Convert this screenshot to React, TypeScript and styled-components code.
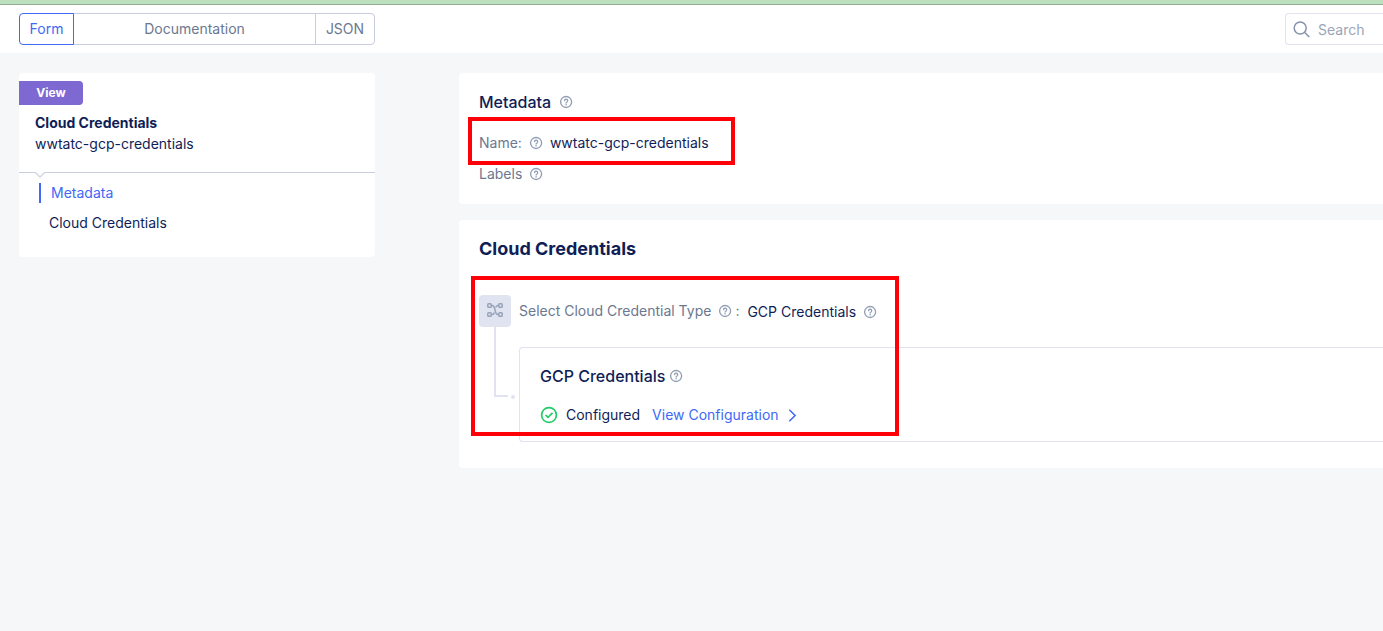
import React from "react";
import styled, { createGlobalStyle } from "styled-components";

const color = {
  navy: "#0f1e57",
  slate: "#6b7890",
  muted: "#9aa5b8",
  blue: "#4169f5",
  line: "#c9cbdf",
  softLine: "#e1e3f0",
  page: "#f6f7f9",
  purple: "#7d69d1",
  green: "#22cb68",
  mark: "#ff0008",
};

const GlobalStyle = createGlobalStyle`
  *, *::before, *::after { box-sizing: border-box; }
  body {
    margin: 0;
    background: ${color.page};
    color: ${color.navy};
    font: 400 14px/20px Inter, "Liberation Sans", sans-serif;
    overflow-x: hidden;
  }
  button, input { font: inherit; }
  h1, h2, h3, p, ul { margin: 0; padding: 0; }
`;

const Banner = styled.div`
  height: 5px;
  background: #bcdfbd;
  border-bottom: 1px solid #8fae93;
`;

const Header = styled.header`
  display: flex;
  justify-content: space-between;
  padding: 8px 0 8px 19px;
  background: #fff;
`;

const Tabs = styled.div`
  display: flex;
  width: 356px;
`;

const Tab = styled.button<{ $active?: boolean; $flex: string }>`
  position: relative;
  z-index: ${(p) => (p.$active ? 1 : 0)};
  flex: ${(p) => p.$flex};
  height: 32px;
  padding: 0;
  border: 1px solid ${(p) => (p.$active ? color.blue : color.line)};
  background: #fff;
  color: ${(p) => (p.$active ? color.blue : color.slate)};
  cursor: pointer;
  & + & { margin-left: -1px; }
  &:first-child { border-radius: 4px 0 0 4px; }
  &:last-child { border-radius: 0 4px 4px 0; }
`;

const SearchBox = styled.label`
  display: flex;
  align-items: center;
  gap: 8px;
  width: 98px;
  height: 32px;
  padding-left: 7px;
  border: 1px solid ${color.softLine};
  border-right: 0;
  border-radius: 4px 0 0 4px;
  color: #8793aa;
  svg { flex: none; }
`;

const SearchInput = styled.input`
  flex: 1;
  min-width: 0;
  padding: 2px 0 0;
  border: 0;
  outline: 0;
  background: none;
  color: ${color.navy};
  &::placeholder { color: ${color.muted}; opacity: 1; }
`;

const Layout = styled.div`
  display: flex;
  align-items: flex-start;
  gap: 84px;
  padding: 20px 0 20px 19px;
`;

const Sidebar = styled.aside`
  flex: none;
  width: 356px;
  padding: 8px 0 24px;
  border-radius: 4px;
  background: #fff;
`;

const Badge = styled.span`
  display: block;
  width: 64px;
  border-radius: 0 4px 4px 0;
  background: ${color.purple};
  color: #fff;
  font-size: 12px;
  font-weight: 700;
  line-height: 24px;
  text-align: center;
`;

const ObjectInfo = styled.div`
  position: relative;
  padding: 8px 16px 17px;
  border-bottom: 1px solid ${color.line};
  svg {
    position: absolute;
    left: 16px;
    bottom: -6px;
  }
`;

const ObjectTitle = styled.h1`
  font-size: 14px;
  font-weight: 700;
  line-height: 20px;
`;

const ObjectName = styled.p`
  line-height: 22px;
`;

const NavList = styled.ul`
  display: flex;
  flex-direction: column;
  gap: 10px;
  padding: 10px 20px 0;
  list-style: none;
`;

const NavLink = styled.a<{ $active?: boolean }>`
  display: block;
  padding-left: 10px;
  border-left: ${(p) => (p.$active ? `2px solid ${color.blue}` : "0")};
  color: ${(p) => (p.$active ? color.blue : color.navy)};
  text-decoration: none;
`;

const Main = styled.main`
  display: flex;
  flex: 1;
  flex-direction: column;
  gap: 16px;
  min-width: 0;
`;

const Panel = styled.section`
  padding: 18px 0 20px 20px;
  border-radius: 4px 0 0 4px;
  background: #fff;
`;

const PanelTitle = styled.h2`
  font-size: 18px;
  font-weight: 700;
  line-height: 22px;
`;

const SubTitle = styled.h3<{ $gap: number }>`
  display: flex;
  align-items: center;
  gap: ${(p) => p.$gap}px;
  font-size: 16px;
  font-weight: 500;
  line-height: 22px;
`;

const Fields = styled.div`
  display: flex;
  flex-direction: column;
  gap: 11px;
  padding-top: 20px;
`;

const Field = styled.div`
  display: flex;
  position: relative;
  align-items: center;
  gap: 8px;
  width: fit-content;
`;

const Label = styled.span`
  color: ${color.slate};
`;

const Highlight = styled.div<{ $inset: string }>`
  position: absolute;
  inset: ${(p) => p.$inset};
  border: 4px solid ${color.mark};
  pointer-events: none;
`;

const Tree = styled.div`
  display: grid;
  position: relative;
  grid-template-columns: 32px 1fr;
  column-gap: 8px;
  padding: 35px 0 6px;
`;

const TreeHighlight = styled.div`
  position: absolute;
  top: 16px;
  bottom: 12px;
  left: -8px;
  width: 428px;
  border: 4px solid ${color.mark};
  pointer-events: none;
`;

const TreeNode = styled.div`
  display: flex;
  align-items: center;
  justify-content: center;
  height: 32px;
  padding-bottom: 2px;
  border-radius: 4px;
  background: #e0e3f0;
  color: #99a3b8;
`;

const Connector = styled.div`
  position: relative;
  width: 14px;
  height: 70px;
  margin-left: 15px;
  border: solid ${color.softLine};
  border-width: 0 0 2px 2px;
  &::after {
    content: "";
    position: absolute;
    right: -7px;
    bottom: -4px;
    width: 4px;
    height: 4px;
    border-radius: 50%;
    background: ${color.softLine};
  }
`;

const Choice = styled.div`
  display: flex;
  align-items: center;
  height: 32px;
`;

const ChoiceLabel = styled.span`
  display: flex;
  align-items: center;
  gap: 8px;
  color: ${color.slate};
`;

const ChoiceColon = styled.span`
  padding: 0 8px 0 4px;
  color: ${color.slate};
`;

const ChoiceValue = styled.span`
  display: flex;
  align-items: center;
  gap: 8px;
  padding-top: 2px;
`;

const Card = styled.div`
  margin-top: 20px;
  padding: 17px 20px 16px;
  border: 1px solid ${color.softLine};
  border-right: 0;
  border-radius: 4px 0 0 4px;
`;

const Status = styled.div`
  display: flex;
  align-items: center;
  gap: 8px;
  margin-top: 18px;
`;

const ConfigLink = styled.a`
  display: flex;
  align-items: center;
  gap: 10px;
  margin-left: 4px;
  color: ${color.blue};
  text-decoration: none;
`;

const HelpIcon = styled.svg`
  flex: none;
  overflow: visible;
`;

const Help = () => (
  <HelpIcon width="12" height="12" viewBox="0 0 12 12" fill="none" stroke="#919db3" strokeLinecap="round" role="img" aria-label="Help">
    <circle cx="6.1" cy="6" r="5.5" strokeWidth="1.3" />
    <path d="M4.6 4.7a1.55 1.55 0 1 1 2.4 1.3c-.6.35-.9.6-.9 1" strokeWidth="1.3" />
    <circle cx="6.1" cy="8.8" r=".8" fill="#919db3" stroke="none" />
  </HelpIcon>
);

export default function App() {
  return (
    <>
      <GlobalStyle />
      <Banner />
      <Header>
        <Tabs>
          <Tab $flex="0 0 55px" $active>Form</Tab>
          <Tab $flex="1">Documentation</Tab>
          <Tab $flex="0 0 60px">JSON</Tab>
        </Tabs>
        <SearchBox>
          <svg width="17" height="17" viewBox="0 0 17 17" fill="none" stroke="currentColor" strokeWidth="1.5">
            <circle cx="7.2" cy="7" r="6" />
            <path d="M11.5 11.3 16.3 16" />
          </svg>
          <SearchInput type="text" placeholder="Search" aria-label="Search" />
        </SearchBox>
      </Header>
      <Layout>
        <Sidebar>
          <Badge>View</Badge>
          <ObjectInfo>
            <ObjectTitle>Cloud Credentials</ObjectTitle>
            <ObjectName>wwtatc-gcp-credentials</ObjectName>
            <svg width="10" height="6" viewBox="0 0 10 6">
              <path d="M.5 0h9v1L5 5.3.5 1z" fill="#fff" />
              <path d="M.3.5 5 5.1 9.7.5" fill="none" stroke={color.line} strokeWidth="1.1" />
            </svg>
          </ObjectInfo>
          <nav>
            <NavList>
              <li><NavLink href="#metadata" $active>Metadata</NavLink></li>
              <li><NavLink href="#cloud-credentials">Cloud Credentials</NavLink></li>
            </NavList>
          </nav>
        </Sidebar>
        <Main>
          <Panel id="metadata">
            <SubTitle as="h2" $gap={9}>Metadata <Help /></SubTitle>
            <Fields>
              <Field>
                <Label>Name:</Label>
                <Help />
                <span>wwtatc-gcp-credentials</span>
                <Highlight $inset="-16px -26px -12px -11px" />
              </Field>
              <Field>
                <Label>Labels</Label>
                <Help />
              </Field>
            </Fields>
          </Panel>
          <Panel id="cloud-credentials">
            <PanelTitle>Cloud Credentials</PanelTitle>
            <Tree>
              <div>
                <TreeNode>
                  <svg width="16" height="16" viewBox="0 0 16 16" fill="none" stroke="currentColor" strokeWidth="1.5">
                    <rect x=".8" y="1.8" width="3.4" height="3.4" rx=".8" />
                    <rect x="11.8" y="1.8" width="3.4" height="3.4" rx=".8" />
                    <rect x=".8" y="10.8" width="3.4" height="3.4" rx=".8" />
                    <rect x="11.8" y="10.8" width="3.4" height="3.4" rx=".8" />
                    <path d="M4.2 3.5h1c3.6 0 2 9 5.6 9h1M11.8 3.5h-1c-1.2 0-1.8.8-2.1 2M4.2 12.5h1c1.2 0 1.8-.8 2.1-2" />
                  </svg>
                </TreeNode>
                <Connector />
              </div>
              <div>
                <Choice>
                  <ChoiceLabel>Select Cloud Credential Type <Help /></ChoiceLabel>
                  <ChoiceColon>:</ChoiceColon>
                  <ChoiceValue>GCP Credentials <Help /></ChoiceValue>
                </Choice>
                <Card>
                  <SubTitle $gap={5}>GCP Credentials <Help /></SubTitle>
                  <Status>
                    <svg width="18" height="18" viewBox="0 0 18 18" fill="none" stroke={color.green} strokeWidth="1.7">
                      <circle cx="9" cy="9" r="7.4" />
                      <path d="m5.5 9 2.5 2.4 4.5-4.5" />
                    </svg>
                    <span>Configured</span>
                    <ConfigLink href="#view-configuration">
                      View Configuration
                      <svg width="8" height="13" viewBox="0 0 8 13" fill="none" stroke="currentColor" strokeWidth="1.5">
                        <path d="m.3 .8 5.8 5.7L.3 12.2" />
                      </svg>
                    </ConfigLink>
                  </Status>
                </Card>
              </div>
              <TreeHighlight />
            </Tree>
          </Panel>
        </Main>
      </Layout>
    </>
  );
}
